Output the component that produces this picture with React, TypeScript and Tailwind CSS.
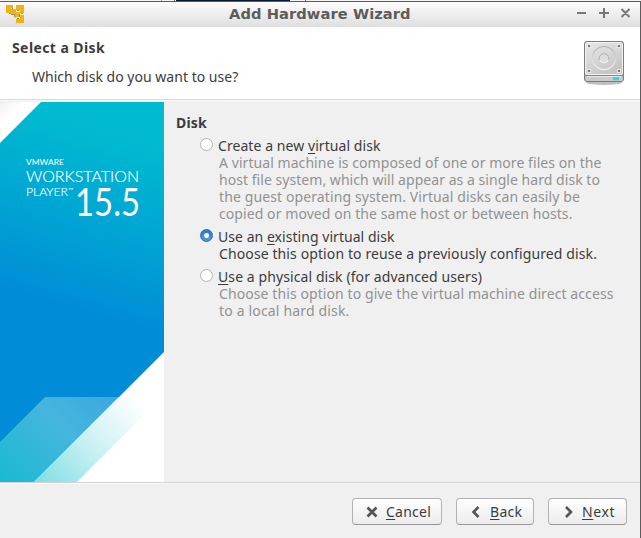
import type { ReactNode } from "react";

function AppIcon() {
  return (
    <svg width="18" height="18" viewBox="0 0 18 18" shapeRendering="crispEdges">
      <path fill="#f0b310" d="M0 0h7v3H5v2H4v3H0zM10 0h8v8h-4V5h-4zM4 5h6v4H4zM9 7h5v5H9zM14 10h4v8h-8v-4h4z" />
      <path fill="#9a8a5c" d="M3 8h1v1H3zM6 3h1v1H6zM5 9h4v1H5zM8 10h1v2H8zM13 9h1v3h-1zM11 5h2v1h-2zM11 13h2v1h-2zM15 8h2v1h-2z" />
      <path fill="#f0b310" d="M9 12h1v1H9zM5 4h5v1H5z" />
    </svg>
  );
}

function DiskIcon() {
  return (
    <svg width="42" height="46" viewBox="0 0 42 46">
      <defs>
        <linearGradient id="plate" x1="0" y1="0" x2="0.6" y2="1">
          <stop offset="0" stopColor="#e6e6e6" />
          <stop offset="0.5" stopColor="#d8d8d8" />
          <stop offset="1" stopColor="#c4c4c4" />
        </linearGradient>
        <linearGradient id="front" x1="0" y1="0" x2="0" y2="1">
          <stop offset="0" stopColor="#9b9b9b" />
          <stop offset="0.4" stopColor="#d8d8d8" />
          <stop offset="1" stopColor="#bdbdbd" />
        </linearGradient>
        <linearGradient id="ring" x1="0" y1="0" x2="0" y2="1">
          <stop offset="0" stopColor="#b0b0b0" />
          <stop offset="1" stopColor="#f8f8f8" />
        </linearGradient>
      </defs>
      <ellipse cx="21" cy="42.5" rx="18" ry="2.5" fill="#000" opacity="0.25" />
      <rect x="1.5" y="1.5" width="39" height="40" rx="2.5" fill="url(#front)" stroke="#7c7c7c" />
      <rect x="2.5" y="2.5" width="37" height="32" rx="2" fill="url(#plate)" stroke="#f3f3f3" />
      <path d="M2 35.5h38" stroke="#858585" />
      <rect x="3" y="36" width="36" height="5" fill="#cacaca" />
      <path d="M4 36.5h34" stroke="#e9e9e9" />
      <circle cx="21" cy="18" r="11.5" fill="none" stroke="url(#ring)" strokeWidth="1.2" />
      <circle cx="21" cy="18.5" r="4.8" fill="#dedede" stroke="#b0b0b0" />
      <path d="M16.5 20a4.8 4.8 0 0 0 9 0" fill="none" stroke="#fafafa" />
      {[[6, 6], [36, 6], [6, 31], [36, 31]].map(([x, y]) => (
        <g key={`${x}-${y}`}>
          <circle cx={x} cy={y} r="2.2" fill="#f5f5f5" />
          <circle cx={x} cy={y} r="1.3" fill="#777" />
        </g>
      ))}
      <rect x="30" y="37" width="6" height="3.2" fill="#17e2ee" />
    </svg>
  );
}

function Banner() {
  return (
    <svg width="164" height="380" viewBox="0 0 164 380" className="block shrink-0" fontFamily="Lato, sans-serif" fill="#fff">
      <defs>
        <linearGradient id="sea" gradientUnits="userSpaceOnUse" x1="110" y1="30" x2="60" y2="205">
          <stop offset="0" stopColor="#00bad0" />
          <stop offset="0.5" stopColor="#00a5d3" />
          <stop offset="1" stopColor="#008cd7" />
        </linearGradient>
        <linearGradient id="beam" gradientUnits="userSpaceOnUse" x1="12" y1="388" x2="125" y2="275">
          <stop offset="0" stopColor="#1bb9d1" />
          <stop offset="0.5" stopColor="#45b6de" />
          <stop offset="1" stopColor="#38a3de" />
        </linearGradient>
        <linearGradient id="pale" gradientUnits="userSpaceOnUse" x1="45" y1="392" x2="142" y2="302">
          <stop offset="0" stopColor="#7ddfe4" />
          <stop offset="0.5" stopColor="#caf0f3" />
          <stop offset="1" stopColor="#fff" />
        </linearGradient>
        <linearGradient id="corner" x1="0" y1="0" x2="0.5" y2="0.5">
          <stop offset="0" stopColor="#f0f0f0" />
          <stop offset="0.6" stopColor="#fff" />
        </linearGradient>
      </defs>
      <rect width="164" height="380" fill="url(#sea)" />
      <path d="M0 0H41L0 41Z" fill="url(#corner)" />
      <path d="M45 295H119L34 380H0V340Z" fill="url(#beam)" />
      <path d="M164 250V380H34Z" />
      <path d="M119 295H162L77 380H34Z" fill="url(#pale)" />
      <text x="26" y="63" fontSize="8.4" textLength="38" lengthAdjust="spacingAndGlyphs">VMWARE</text>
      <text x="26" y="80" fontSize="15.5" textLength="113" lengthAdjust="spacingAndGlyphs" className="font-light" stroke="#fff" strokeWidth="0.15">WORKSTATION</text>
      <text x="26" y="94" fontSize="11.5" textLength="42" lengthAdjust="spacingAndGlyphs" className="font-light" stroke="#fff" strokeWidth="0.15">PLAYER</text>
      <text x="68" y="90" fontSize="6" textLength="5" lengthAdjust="spacingAndGlyphs">™</text>
      <text x="75" y="114" fontSize="39" textLength="65" lengthAdjust="spacingAndGlyphs">15.5</text>
    </svg>
  );
}

function Radio({ checked = false }: { checked?: boolean }) {
  return checked ? (
    <span className="flex size-[13px] shrink-0 items-center justify-center rounded-full border border-[#2a6cab] bg-linear-to-b from-[#2a79c4] to-[#4d9ce0]">
      <span className="size-[5px] rounded-full bg-white" />
    </span>
  ) : (
    <span className="size-[13px] shrink-0 rounded-full border border-[#b4b4b4] bg-white" />
  );
}

function Option({ checked, label, children }: { checked?: boolean; label: ReactNode; children: ReactNode }) {
  return (
    <div>
      <div className="flex h-[17px] gap-[5px] pt-px leading-[15px] text-[#3c3c3c]">
        <Radio checked={checked} />
        {label}
      </div>
      <div className={`pl-[19px] leading-[17px] whitespace-nowrap ${checked ? "text-[#3c3c3c]" : "text-[#929292]"}`}>{children}</div>
    </div>
  );
}

function Key({ children }: { children: ReactNode }) {
  return <span className="underline decoration-1 underline-offset-2">{children}</span>;
}

const buttonClass =
  "flex h-[27px] items-center rounded-[4px] border border-[#b2b2b2] border-b-[#969696] bg-linear-to-b from-white to-[#ececec] pl-[13px] leading-[17px] text-[#3c3c3c]";

export default function App() {
  return (
    <div className="flex h-[538px] w-[641px] flex-col overflow-hidden bg-[#f0f0f0] font-['Noto_Sans',sans-serif] text-[14px]">
      <div className="flex h-px shrink-0 bg-[#f4f4f4]">
        <span className="ml-[161px] w-px bg-[#aaa]" />
        <span className="ml-[12px] w-px bg-[#777]" />
        <span className="ml-px w-[114px] bg-[#04193a]" />
        <span className="ml-[15px] w-px bg-[#777]" />
      </div>
      <div className="flex min-h-0 flex-1 flex-col border-t border-r border-[#5c5c5c]">
        <header className="flex h-[25px] shrink-0 items-start bg-linear-to-b from-[#fcfcfc] to-[#dfdfdf] pt-[3px] pl-[6px]">
          <AppIcon />
          <h1 className="ml-[205px] w-[320px] text-[14.67px] leading-[18px] font-bold tracking-[0.07px] text-[#5c5c5c] font-['DejaVu_Sans',sans-serif]">
            Add Hardware Wizard
          </h1>
          <svg width="56" height="12" viewBox="0 0 56 12" className="mt-[2px] ml-[27px]" stroke="#777" strokeWidth="2" fill="none">
            <path d="M1 6h9M23 6h10M28 1v10M45.5 2l8 8M53.5 2l-8 8" />
          </svg>
        </header>

        <section className="flex h-[72px] shrink-0 justify-between bg-white pr-[15px] pl-3 text-[#3c3c3c]">
          <div className="pt-3">
            <h2 className="leading-[18px] font-bold tracking-[0.406px]">Select a Disk</h2>
            <p className="mt-[11px] ml-5 leading-[18px] tracking-[0.02px]">Which disk do you want to use?</p>
          </div>
          <div className="pt-[13px]">
            <DiskIcon />
          </div>
        </section>
        <div className="h-[3px] shrink-0 border-t border-b border-t-[#d9d9d9] border-b-[#f0f0f0] bg-[#fafafa]" />

        <main className="flex h-[380px] shrink-0">
          <Banner />
          <div className="pt-3 pl-3">
            <h3 className="leading-[18px] font-bold tracking-[0.211px] text-[#3c3c3c]">Disk</h3>
            <div className="flex flex-col gap-[6px] pt-[5px] pl-[24px]">
              <Option label={<span className="tracking-[0.067px]">Create a new <Key>v</Key>irtual disk</span>}>
                <p className="tracking-[0.063px]">A virtual machine is composed of one or more files on the</p>
                <p className="tracking-[0.044px]">host file system, which will appear as a single hard disk to</p>
                <p className="tracking-[0.111px]">the guest operating system. Virtual disks can easily be</p>
                <p className="tracking-[0.078px]">copied or moved on the same host or between hosts.</p>
              </Option>
              <Option checked label={<span className="tracking-[0.044px]">Use an <Key>e</Key>xisting virtual disk</span>}>
                <p className="tracking-[0.109px]">Choose this option to reuse a previously configured disk.</p>
              </Option>
              <Option label={<span className="tracking-[0.091px]"><Key>U</Key>se a physical disk (for advanced users)</span>}>
                <p className="tracking-[0.088px]">Choose this option to give the virtual machine direct access</p>
                <p className="tracking-[0.167px]">to a local hard disk.</p>
              </Option>
            </div>
          </div>
        </main>

        <footer className="flex min-h-0 flex-1 justify-end gap-[14px] border-t border-[#d2d2d2] pt-[15px] pr-[13px] shadow-[inset_0_1px_0_#fafafa]">
          <button className={`${buttonClass} w-[90px] gap-[8px]`}>
            <svg width="12" height="12" viewBox="0 0 12 12" stroke="#555" strokeWidth="2.8" fill="none">
              <path d="M1.5 1.5l9 9M10.5 1.5l-9 9" />
            </svg>
            <span className="tracking-[0.234px]"><Key>C</Key>ancel</span>
          </button>
          <button className={`${buttonClass} w-[78px] gap-[8px]`}>
            <svg width="12" height="12" viewBox="0 0 12 12" stroke="#555" strokeWidth="2.6" fill="none">
              <path d="M8.5 1L3.5 6l5 5" />
            </svg>
            <span className="tracking-[0.3px]"><Key>B</Key>ack</span>
          </button>
          <button className={`${buttonClass} w-[79px] gap-[8px]`}>
            <svg width="12" height="12" viewBox="0 0 12 12" stroke="#555" strokeWidth="2.6" fill="none">
              <path d="M4 1l5 5-5 5" />
            </svg>
            <span className="tracking-[0.6px]"><Key>N</Key>ext</span>
          </button>
        </footer>
      </div>
    </div>
  );
}
